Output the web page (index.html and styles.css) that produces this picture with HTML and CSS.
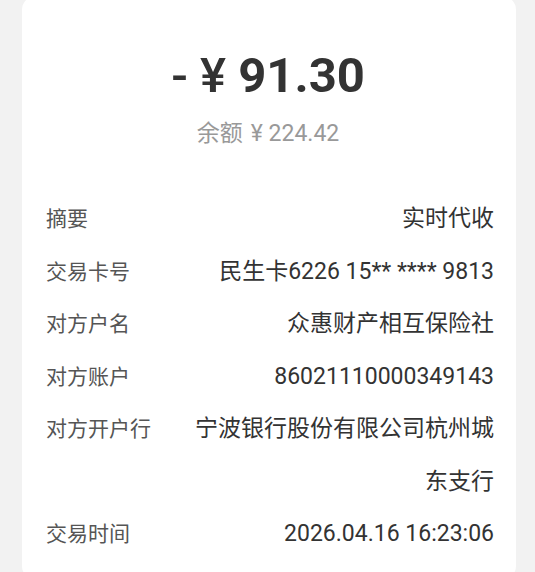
FILE: index.html
```html
<!DOCTYPE html>
<html lang="zh-CN">
<head>
    <meta charset="UTF-8">
    <meta name="viewport" content="width=device-width, initial-scale=1.0">
    <title>交易详情</title>
<link rel="stylesheet" href="styles.css">
</head>
<body>

<main class="card">
    <div class="summary">
        <div class="amount"><span class="sign">- ¥</span> 91.30</div>
        <div class="balance">余额<span class="yen">¥</span> 224.42</div>
    </div>

    <div class="details">
        <div class="row">
            <span class="label">摘要</span>
            <span class="value">实时代收</span>
        </div>
        <div class="row">
            <span class="label">交易卡号</span>
            <span class="value">民生卡6226 15** **** 9813</span>
        </div>
        <div class="row">
            <span class="label">对方户名</span>
            <span class="value">众惠财产相互保险社</span>
        </div>
        <div class="row">
            <span class="label">对方账户</span>
            <span class="value">86021110000349143</span>
        </div>
        <div class="row">
            <span class="label">对方开户行</span>
            <span class="value">宁波银行股份有限公司杭州城东支行</span>
        </div>
        <div class="row">
            <span class="label">交易时间</span>
            <span class="value">2026.04.16 16:23:06</span>
        </div>
    </div>
</main>

</body>
</html>
```

FILE: styles.css
```css
body{
    margin: 0;
    padding: 0 19px 0 22px;
    background-color: #f2f2f2;
    font-family: Roboto, "Noto Sans CJK SC", sans-serif;
    overflow: hidden;
}
.card{
    margin-top: -4px;
    background-color: #fff;
    border-radius: 14px;
    padding: 4px 22px 0 24px;
    height: 580px;
}
.summary{
    text-align: center;
    padding-top: 45px;
    margin-left: -4px;
}
.amount{
    font-size: 49px;
    font-weight: 700;
    color: #333;
    line-height: 62px;
}
.sign{
    font-weight: 500;
}
.balance{
    font-size: 23px;
    color: #999;
    line-height: 30px;
    margin-top: 12px;
}
.yen{
    margin-left: 8px;
}
.details{
    margin-top: 44px;
}
.row{
    display: flex;
    justify-content: space-between;
    line-height: 52.5px;
}
.label{
    flex-shrink: 0;
    font-size: 21px;
    color: #555;
}
.value{
    flex: 1;
    margin-left: 44px;
    text-align: right;
    font-size: 23px;
    color: #333;
}
```
